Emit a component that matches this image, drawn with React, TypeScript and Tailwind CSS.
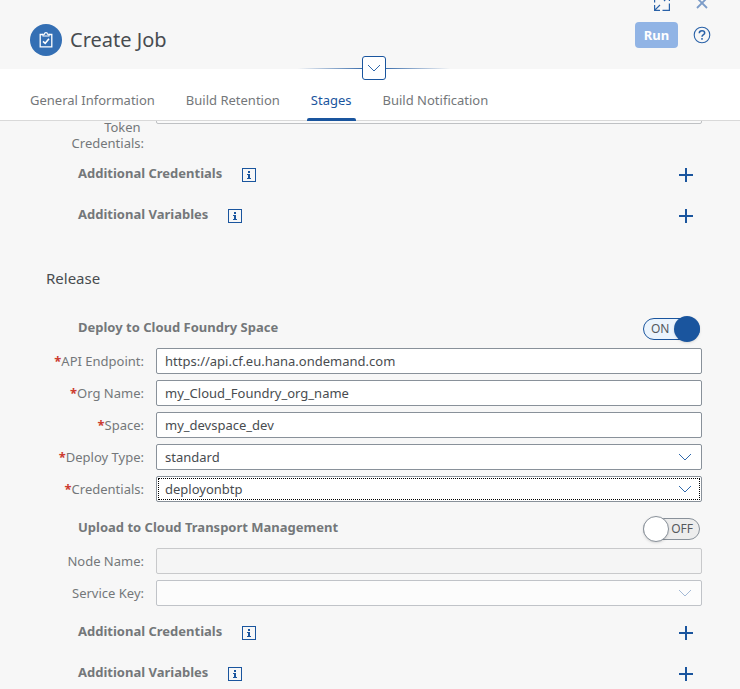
import type { ReactNode } from 'react';

const tabs = ['General Information', 'Build Retention', 'Stages', 'Build Notification'];

function Chevron({ className = '' }: { className?: string }) {
  return (
    <svg viewBox="0 0 14 8" width="14" height="8" fill="none" stroke="currentColor" className={className} aria-hidden="true">
      <path d="M1 1l6 6 6-6" strokeWidth="1" />
    </svg>
  );
}

function InfoIcon() {
  return (
    <svg viewBox="0 0 14 14" width="14" height="14" fill="none" aria-hidden="true">
      <rect x=".5" y=".5" width="13" height="13" stroke="currentColor" />
      <path d="M6 3h2v2H6zM5 6h3v4h1v1H5v-1h1V7H5z" fill="currentColor" />
    </svg>
  );
}

function ExtraRow({ title }: { title: string }) {
  return (
    <div className="flex h-[41px] items-center pr-[47px] pl-[78px]">
      <h3 className="pb-1 font-bold">{title}</h3>
      <button type="button" aria-label={`About ${title}`} className="ml-[20px] text-[#1a559e]">
        <InfoIcon />
      </button>
      <button type="button" aria-label={`Add ${title}`} className="ml-auto text-[#1a559e]">
        <svg viewBox="0 0 14 14" width="14" height="14" stroke="currentColor" strokeWidth="2" aria-hidden="true">
          <path d="M7 0v14M0 7h14" />
        </svg>
      </button>
    </div>
  );
}

function SwitchRow({ title, id, on }: { title: string; id: string; on: boolean }) {
  return (
    <div className="flex h-10 items-center justify-between pr-10 pl-[78px]">
      <h3 id={id} className="pb-[2px] font-bold">{title}</h3>
      <label className="relative mt-[2px] flex h-[22px] w-[57px] cursor-pointer items-center">
        <input type="checkbox" role="switch" defaultChecked={on} aria-labelledby={id} className="sr-only" />
        <span
          className={
            on
              ? 'flex h-[22px] w-full items-center rounded-full border border-[#1a559e] bg-[#ebf4fd] pl-[7px] text-xs text-[#55595d]'
              : 'flex h-[22px] w-full items-center justify-end rounded-full border border-[#89919a] bg-[#ededed] pr-[6px] text-xs text-[#55595d]'
          }
        >
          {on ? 'ON' : 'OFF'}
        </span>
        <span
          className={
            on
              ? 'absolute right-0 size-[26px] rounded-full bg-[#1a559e] shadow-sm'
              : 'absolute left-0 size-[26px] rounded-full border border-[#89919a] bg-white shadow-sm'
          }
        />
      </label>
    </div>
  );
}

function Field({ id, label, required, children }: { id: string; label: string; required?: boolean; children: ReactNode }) {
  return (
    <div className="mb-[6px] flex h-[26px] items-center pr-[38px]">
      <label htmlFor={id} className="mr-3 w-36 text-right whitespace-nowrap">
        {required && <span className="font-bold text-[#cc3b30]">*</span>}
        {label}:
      </label>
      {children}
    </div>
  );
}

function TextField({ id, label, value, disabled }: { id: string; label: string; value: string; disabled?: boolean }) {
  return (
    <Field id={id} label={label} required={!disabled}>
      <input
        id={id}
        type="text"
        defaultValue={value}
        disabled={disabled}
        className="h-[26px] min-w-0 flex-1 rounded-[2px] border border-[#89919a] bg-white px-2 text-[#484c50] disabled:border-[#c8c9cb] disabled:bg-[#f5f5f5]"
      />
    </Field>
  );
}

function SelectField({ id, label, value, disabled, focused }: { id: string; label: string; value: string; disabled?: boolean; focused?: boolean }) {
  return (
    <Field id={id} label={label} required={!disabled}>
      <div className="relative min-w-0 flex-1">
        <select
          id={id}
          defaultValue={value}
          disabled={disabled}
          className={`block h-[26px] w-full appearance-none rounded-[2px] border border-[#89919a] bg-white px-2 text-[#484c50] disabled:border-[#c0c3c8] disabled:bg-[#fcfcfc] disabled:opacity-100 ${focused ? 'outline-1 -outline-offset-3 outline-black outline-dotted' : ''}`}
        >
          <option value={value}>{value}</option>
        </select>
        <Chevron className={`pointer-events-none absolute top-[9px] right-[10px] ${disabled ? 'text-[#a4bad6]' : 'text-[#2f68ab]'}`} />
      </div>
    </Field>
  );
}

export default function App() {
  return (
    <div className="flex h-screen flex-col overflow-hidden bg-[#f7f7f7] font-['Noto_Sans','Open_Sans',sans-serif] text-[13px] leading-4 text-[#74777a]">
      <header className="relative flex h-[69px] shrink-0 items-start justify-between pr-[29px] pl-[30px]">
        <div className="mt-6 flex items-center gap-2">
          <span className="grid size-8 place-items-center rounded-full bg-[#346fb4] text-white">
            <svg viewBox="0 0 14 16" width="14" height="16" fill="none" stroke="currentColor" aria-hidden="true">
              <path d="M4 2.5H1.2v12.3h11.6V2.5H10" strokeWidth="1.3" />
              <path d="M4 4V2.2h1.5C5.5 1 6 .6 7 .6s1.500.4 1.500 1.600H10V4z" strokeWidth="1.1" />
              <path d="M4 9.300l2.200 2 3.800-4.500" strokeWidth="1.6" />
            </svg>
          </span>
          <h1 className="text-xl leading-8 text-[#484c50]">Create Job</h1>
        </div>
        <div className="-mt-[5px] flex flex-col text-[#2a62a8]">
          <div className="flex h-4 items-center justify-between pr-[3px] pl-[19px]">
            <button type="button" aria-label="Full screen">
              <svg viewBox="0 0 16 16" width="16" height="16" fill="none" stroke="currentColor" strokeWidth="1.2" aria-hidden="true">
                <path d="M.6 10v5.400H6M.8 15.200l5.200-5.200M8.500 15.400h6.900V8.500M.6 7.500V.6h6.900M10 .6h5.400V6M15.200.8L10 6" />
              </svg>
            </button>
            <button type="button" aria-label="Close" className="text-[#7c9cc8]">
              <svg viewBox="0 0 12 12" width="12" height="12" stroke="currentColor" strokeWidth="1.800" aria-hidden="true">
                <path d="M1 1l10 10M11 1L1 11" />
              </svg>
            </button>
          </div>
          <div className="mt-[11px] flex items-center gap-[15px]">
            <button type="button" className="h-[26px] w-[43px] rounded-[4px] bg-[#91b4e5] text-center font-bold text-white">Run</button>
            <button type="button" aria-label="Help">
              <svg viewBox="0 0 18 18" width="18" height="18" fill="none" stroke="currentColor" aria-hidden="true">
                <circle cx="9" cy="9" r="7.800" strokeWidth="1.1" />
                <path d="M6.300 7.200C6.300 5.500 7.500 4.700 9 4.700s2.700.8 2.700 2.200C11.700 8.600 9 8.500 9 10.700M9 12v1.800" strokeWidth="1.500" />
              </svg>
            </button>
          </div>
        </div>
        <div className="absolute bottom-0 left-1/2 ml-1 h-px w-[152px] -translate-x-1/2 bg-linear-to-r from-transparent via-[#1a559e] to-transparent" />
        <button
          type="button"
          aria-label="Expand header"
          className="absolute -bottom-[11px] left-1/2 z-10 ml-1 grid size-6 -translate-x-1/2 place-items-center rounded-[3px] border border-[#1a559e] bg-white text-[#2f68ab]"
        >
          <Chevron />
        </button>
      </header>

      <nav className="flex h-[52px] shrink-0 gap-[23px] border-b border-[#d9d9d9] bg-white px-[26px]">
        {tabs.map((tab) => (
          <a
            key={tab}
            href="#"
            aria-current={tab === 'Stages' ? 'page' : undefined}
            className={
              tab === 'Stages'
                ? 'relative px-1 pt-[23px] text-[#1a559e] after:absolute after:inset-x-0 after:-bottom-px after:h-[3px] after:rounded-t-[2px] after:bg-[#1a559e]'
                : 'px-1 pt-[23px]'
            }
          >
            {tab}
          </a>
        ))}
      </nav>

      <main className="min-h-0 flex-1 overflow-hidden">
        <div className="-mt-[23px] mb-[3px] flex items-start pr-[38px]">
          <label htmlFor="token" className="mr-3 w-36 pt-[21px] text-right">
            Token&nbsp;<br />Credentials:
          </label>
          <input id="token" type="text" disabled className="h-[26px] min-w-0 flex-1 rounded-[2px] border border-[#bfc1c4] bg-[#fafafa]" />
        </div>
        <ExtraRow title="Additional Credentials" />
        <ExtraRow title="Additional Variables" />

        <h2 className="mt-[29px] mb-[17px] pl-[46px] text-[15px] leading-[26px] text-[#484c50]">Release</h2>

        <SwitchRow id="deploy" title="Deploy to Cloud Foundry Space" on />
        <TextField id="api" label="API Endpoint" value="https://api.cf.eu.hana.ondemand.com" />
        <TextField id="org" label="Org Name" value="my_Cloud_Foundry_org_name" />
        <TextField id="space" label="Space" value="my_devspace_dev" />
        <SelectField id="type" label="Deploy Type" value="standard" />
        <SelectField id="cred" label="Credentials" value="deployonbtp" focused />

        <SwitchRow id="upload" title="Upload to Cloud Transport Management" on={false} />
        <TextField id="node" label="Node Name" value="" disabled />
        <SelectField id="key" label="Service Key" value="" disabled />

        <ExtraRow title="Additional Credentials" />
        <ExtraRow title="Additional Variables" />
      </main>
    </div>
  );
}
